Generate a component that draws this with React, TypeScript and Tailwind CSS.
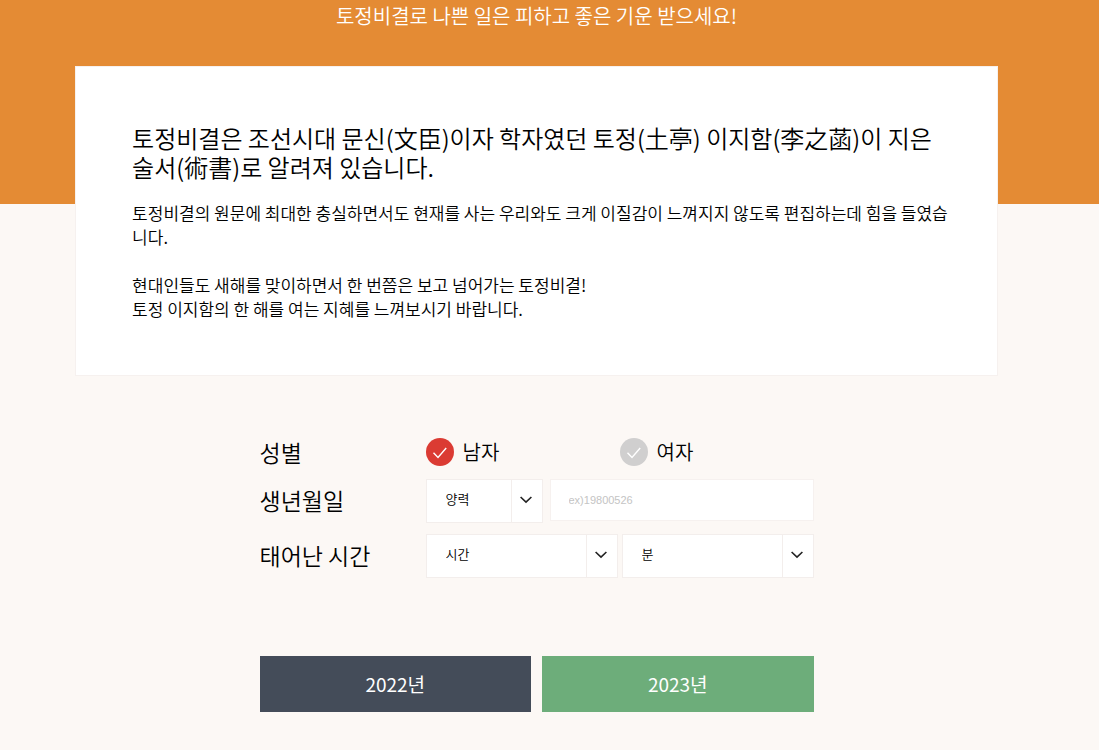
import { useState } from "react";

const Arrow = () => (
  <svg
    viewBox="0 0 12 8"
    className="w-3 h-2"
    fill="none"
    stroke="#222222"
    strokeWidth="1.6"
    aria-hidden="true"
  >
    <path d="M0.6 1 L6 6.2 L11.4 1" />
  </svg>
);

type SelectBoxProps = {
  id: string;
  label: string;
  options: string[];
  className?: string;
};

const SelectBox = ({ id, label, options, className = "" }: SelectBoxProps) => (
  <div className={`relative h-11 ${className}`}>
    <select
      id={id}
      aria-label={label}
      className="appearance-none w-full h-full pl-[19px] pr-9 pb-1 bg-white border border-[#f3eeec] text-[13px] text-black outline-none"
    >
      {options.map((option) => (
        <option key={option}>{option}</option>
      ))}
    </select>
    <span className="absolute inset-y-px right-px w-[31px] pr-px pb-0.5 border-l border-[#f3eeec] flex items-center justify-center pointer-events-none">
      <Arrow />
    </span>
  </div>
);

type GenderProps = {
  value: string;
  label: string;
  checked: boolean;
  onChange: (value: string) => void;
};

const Gender = ({ value, label, checked, onChange }: GenderProps) => (
  <label className="flex items-center gap-[9px] text-[20px] leading-7 cursor-pointer">
    <span className="relative w-7 h-7 shrink-0">
      <input
        type="radio"
        name="gender"
        value={value}
        checked={checked}
        onChange={() => onChange(value)}
        className="appearance-none block w-7 h-7 rounded-full bg-[#d0cfcf] checked:bg-[#db3b33] cursor-pointer"
      />
      <svg
        viewBox="0 0 28 28"
        className="absolute inset-0 w-7 h-7 pointer-events-none"
        fill="none"
        stroke="#ffffff"
        strokeWidth="1.4"
        aria-hidden="true"
      >
        <path d="M7.5 14.8 L12 19.4 L20.2 10" />
      </svg>
    </span>
    {label}
  </label>
);

const App = () => {
  const [gender, setGender] = useState("male");

  return (
    <div className="min-h-screen bg-[#fcf8f5] text-black font-[350] font-['Noto_Sans_CJK_KR',sans-serif]">
      {/* Banner */}
      <header className="h-[204px] bg-[#e48b34] pr-[26px] pt-px">
        <p className="text-center text-white text-[20px] leading-[30px]">
          토정비결로 나쁜 일은 피하고 좋은 기운 받으세요!
        </p>
      </header>

      <main className="-mt-[138px] pr-[26px] pb-[38px]">
        {/* Introduction */}
        <section className="relative w-[86%] mx-auto bg-white border border-[#f6f1ef] pl-14 pr-12 pt-14 pb-[54px]">
          <h1 className="text-[24px] leading-[29px]">
            토정비결은 조선시대 문신(文臣)이자 학자였던 토정(土亭) 이지함(李之菡)이 지은 술서(術書)로 알려져 있습니다.
          </h1>
          <div className="mt-5 text-[17px] leading-6">
            <p>
              토정비결의 원문에 최대한 충실하면서도 현재를 사는 우리와도 크게 이질감이 느껴지지 않도록 편집하는데 힘을 들였습니다.
            </p>
            <p className="mt-6">
              현대인들도 새해를 맞이하면서 한 번쯤은 보고 넘어가는 토정비결!
              <br />
              토정 이지함의 한 해를 여는 지혜를 느껴보시기 바랍니다.
            </p>
          </div>
        </section>

        {/* Form */}
        <form
          className="w-full max-w-[554px] mx-auto mt-[60px]"
          onSubmit={(e) => e.preventDefault()}
        >
          <div className="flex flex-col gap-[11px]">
            <div className="flex items-center h-8">
              <span className="w-[166px] shrink-0 text-[23px] leading-8">성별</span>
              <div className="grid grid-cols-2 flex-1">
                <Gender value="male" label="남자" checked={gender === "male"} onChange={setGender} />
                <Gender value="female" label="여자" checked={gender === "female"} onChange={setGender} />
              </div>
            </div>

            <div className="flex items-center">
              <label htmlFor="birth" className="w-[166px] shrink-0 pb-0.5 text-[23px] leading-8">
                생년월일
              </label>
              <div className="flex flex-1 gap-[7px]">
                <SelectBox
                  id="calendar"
                  label="양력/음력"
                  options={["양력", "음력"]}
                  className="w-[117px] shrink-0"
                />
                <input
                  id="birth"
                  type="text"
                  placeholder="ex)19800526"
                  className="flex-1 min-w-0 h-[42px] px-[18px] bg-white border border-[#f6f1ef] font-normal font-['Liberation_Sans',sans-serif] text-[11px] placeholder:text-[#c4c4c4] outline-none"
                />
              </div>
            </div>

            <div className="flex items-center">
              <label htmlFor="hour" className="w-[166px] shrink-0 pb-0.5 text-[23px] leading-8">
                태어난 시간
              </label>
              <div className="grid grid-cols-2 flex-1 gap-1">
                <SelectBox id="hour" label="시간" options={["시간", "00시", "06시", "12시", "18시"]} />
                <SelectBox id="minute" label="분" options={["분", "00분", "15분", "30분", "45분"]} />
              </div>
            </div>
          </div>

          <div className="grid grid-cols-2 gap-[11px] mt-[78px] text-[19px] font-normal text-white">
            <button type="submit" className="h-14 bg-[#444c59]">
              2022년
            </button>
            <button type="submit" className="h-14 bg-[#6dad7a]">
              2023년
            </button>
          </div>
        </form>
      </main>
    </div>
  );
};

export default App;
